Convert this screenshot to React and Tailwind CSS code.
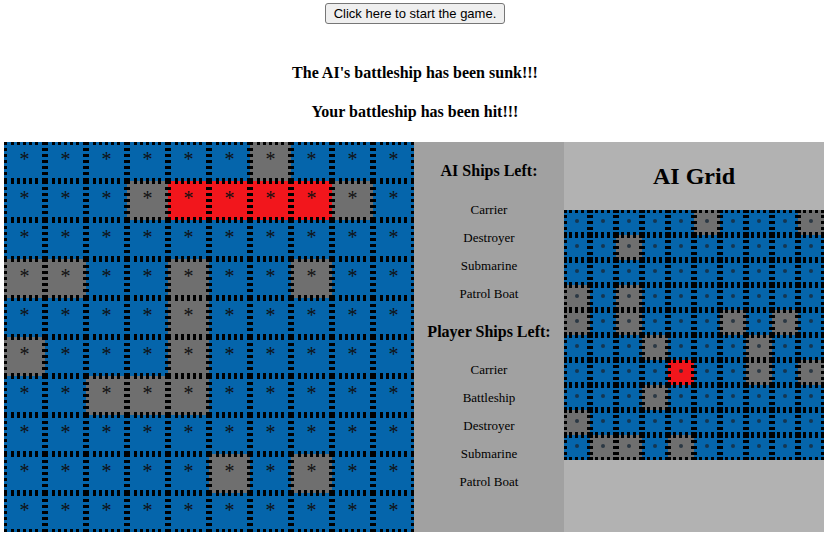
import React from "react";

// B = blue (open water), G = gray (miss), R = red (hit)
const playerBoard = [
  "BBBBBBGBBB",
  "BBBGRRRRGB",
  "BBBBBBBBBB",
  "GGBBGBBGBB",
  "BBBBGBBBBB",
  "GBBBGBBBBB",
  "BBGGGBBBBB",
  "BBBBBBBBBB",
  "BBBBBGBGBB",
  "BBBBBBBBBB",
];

const aiBoard = [
  "BBBBBGBBBG",
  "BBGBBBBBBB",
  "BBBBBBBBBB",
  "GBGBBBBBBB",
  "GBGBBBGBGB",
  "BBBGBBBGBB",
  "BBBBRBBGBG",
  "BBBGBBBBBB",
  "GBBBBBBBBB",
  "BGGBGBBBBB",
];

const cellColor = {
  B: "bg-[#0565ab]",
  G: "bg-[#6f6f6f]",
  R: "bg-[#f2161c]",
};

const aiShips = ["Carrier", "Destroyer", "Submarine", "Patrol Boat"];
const playerShips = ["Carrier", "Battleship", "Destroyer", "Submarine", "Patrol Boat"];

function BigGrid({ board }) {
  return (
    <div className="flex flex-col">
      {board.map((row, r) => (
        <div key={r} className="flex">
          {row.split("").map((c, i) => (
            <div
              key={i}
              className={`box-border w-[41px] h-[39px] border-[3px] border-dotted border-black flex justify-center pt-[4px] text-[20px] leading-[20px] text-[#111] ${cellColor[c]}`}
            >
              *
            </div>
          ))}
        </div>
      ))}
    </div>
  );
}

function SmallGrid({ board }) {
  return (
    <div className="flex flex-col">
      {board.map((row, r) => (
        <div key={r} className="flex">
          {row.split("").map((c, i) => (
            <div
              key={i}
              className={`box-border w-[26px] h-[25px] border-[3px] border-dotted border-black flex items-center justify-center ${cellColor[c]}`}
            >
              <div className="w-[4px] h-[4px] rounded-full bg-[#1a2a3a] opacity-80 -mt-[3px]" />
            </div>
          ))}
        </div>
      ))}
    </div>
  );
}

export default function App() {
  return (
    <div className="w-[830px] h-[544px] bg-white flex flex-col items-center font-['Liberation_Serif',serif] text-black">
      <button className="mt-[3px] h-[21px] px-[8px] bg-[#efefef] border border-[#767676] rounded-[3px] text-[13px] leading-[16px] font-['Liberation_Sans',Arial,sans-serif]">
        Click here to start the game.
      </button>

      <h3 className="mt-[40px] text-[16px] leading-[18px] font-bold">The AI's battleship has been sunk!!!</h3>
      <h3 className="mt-[21px] text-[16px] leading-[18px] font-bold">Your battleship has been hit!!!</h3>

      <div className="mt-[21px] w-full flex pl-[4px]">
        <BigGrid board={playerBoard} />

        <div className="w-[150px] h-[390px] bg-[#a1a1a1] flex flex-col items-center pt-[19px]">
          <div className="text-[16px] leading-[20px] font-bold">AI Ships Left:</div>
          <div className="mt-[15px] flex flex-col items-center">
            {aiShips.map((s) => (
              <div key={s} className="text-[13px] leading-[28px]">{s}</div>
            ))}
          </div>
          <div className="mt-[14px] text-[16px] leading-[20px] font-bold">Player Ships Left:</div>
          <div className="mt-[14px] flex flex-col items-center">
            {playerShips.map((s) => (
              <div key={s} className="text-[13px] leading-[28px]">{s}</div>
            ))}
          </div>
        </div>

        <div className="w-[260px] h-[390px] bg-[#b2b2b2] flex flex-col">
          <div className="h-[68px] flex items-center justify-center text-[24px] leading-[28px] font-bold">
            AI Grid
          </div>
          <SmallGrid board={aiBoard} />
        </div>
      </div>
    </div>
  );
}
